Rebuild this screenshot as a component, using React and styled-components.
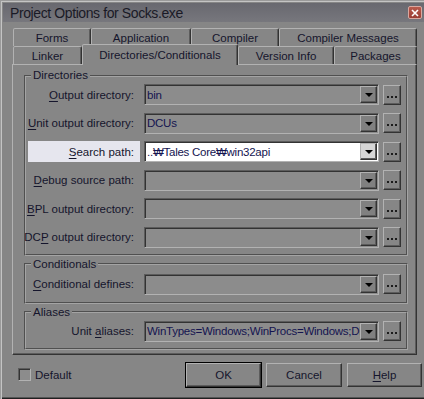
import React from 'react'
import styled, { createGlobalStyle } from 'styled-components'

const c = {
  face: '#868686',
  light: '#b2b2b2',
  mid: '#9c9c9c',
  shadow: '#5c5c5c',
  dark: '#333333',
  text: '#15152c',
  field: '#8c8c8c',
}

const GlobalStyle = createGlobalStyle`
  body {
    margin: 0;
    background: ${c.face};
  }
  * {
    box-sizing: border-box;
  }
`

const Window = styled.div`
  width: 424px;
  height: 399px;
  overflow: hidden;
  display: flex;
  flex-direction: column;
  padding: 3px 0 3px 3px;
  background: ${c.face};
  box-shadow: inset 1px 1px 0 #9a9a9a, inset 2px 2px 0 #c4c4c4,
    inset 0 -1px 0 #202020, inset 0 -2px 0 #555;
  font-family: 'Liberation Sans', Arial, sans-serif;
  font-size: 11.5px;
  color: ${c.text};
`

const TitleBar = styled.div`
  height: 19px;
  flex: 0 0 19px;
  display: flex;
  align-items: center;
  justify-content: space-between;
  padding: 0 2px 0 7px;
  background: linear-gradient(#68686f, #77777d);
  font-size: 14px;
  letter-spacing: -0.4px;
  color: #1a1a26;
`

const CloseBtn = styled.div`
  width: 14px;
  height: 13px;
  border-radius: 2px;
  border: 1px solid #d8a8a0;
  background: linear-gradient(#b85a4c, #9a3e34);
  display: flex;
  align-items: center;
  justify-content: center;
`

const Body = styled.div`
  flex: 1;
  display: flex;
  flex-direction: column;
  padding: 7px 7px 0 9px;
`

const TabRow = styled.div`
  display: flex;
  align-items: flex-end;
  height: ${p => p.$h}px;
  margin-left: 1px;
`

const Tab = styled.div`
  position: relative;
  z-index: ${p => (p.$active ? 2 : 1)};
  width: ${p => p.$w}px;
  height: ${p => (p.$active ? 21 : p.$h)}px;
  margin-bottom: ${p => (p.$active ? -1 : 0)}px;
  display: flex;
  align-items: ${p => (p.$active ? 'flex-start' : 'center')};
  justify-content: center;
  padding-top: ${p => (p.$active ? 4 : 0)}px;
  background: ${c.face};
  border: 1px solid;
  border-bottom: none;
  border-color: ${c.light} ${c.dark} transparent ${c.light};
  border-radius: 2px 2px 0 0;
  box-shadow: inset -1px 0 0 ${c.shadow};
`

const Page = styled.div`
  height: 291px;
  flex: 0 0 291px;
  display: flex;
  flex-direction: column;
  gap: 2px;
  padding: 4px 8px 0 11px;
  border: 1px solid;
  border-color: ${c.light} ${c.dark} ${c.dark} ${c.light};
  box-shadow: inset -1px -1px 0 ${c.shadow};
`

const Group = styled.fieldset`
  margin: 0;
  min-width: 0;
  padding: ${p => p.$pt}px 0 ${p => p.$pb}px 2px;
  border: 2px groove #a4a4a4;
`

const Legend = styled.legend`
  margin-left: 3px;
  padding: 0 2px;
  line-height: 13px;
`

const Rows = styled.div`
  display: grid;
  grid-template-columns: 112px 235px 18px;
  grid-auto-rows: 21px;
  column-gap: 4px;
  row-gap: 7.6px;
`

const Label = styled.label`
  display: flex;
  align-items: center;
  justify-content: flex-end;
  padding-right: 6px;
  white-space: pre;
  background: ${p => (p.$hl ? '#e6e6ee' : 'transparent')};
  u {
    text-decoration-thickness: 1px;
    text-underline-offset: 2px;
  }
`

const Field = styled.div`
  display: flex;
  align-items: center;
  padding: 1px 1px 1px 2px;
  background: ${p => (p.$white ? '#ffffff' : c.field)};
  border: 1px solid;
  border-color: ${c.shadow} ${c.light} ${c.light} ${c.shadow};
  box-shadow: inset 1px 1px 0 ${c.dark};
  color: #141450;
  overflow: hidden;
`

const Value = styled.span`
  flex: 1;
  min-width: 0;
  overflow: hidden;
  white-space: nowrap;
  font-size: 11.5px;
  letter-spacing: -0.25px;
`

const DropBtn = styled.div`
  flex: 0 0 17px;
  height: 17px;
  display: flex;
  align-items: center;
  justify-content: center;
  background: ${p => (p.$white ? '#d6d6d6' : '#808080')};
  border: 1px solid;
  border-color: ${c.light} ${c.dark} ${c.dark} ${c.light};
  box-shadow: inset -1px -1px 0 ${c.shadow};

  &::after {
    content: '';
    border-left: 4px solid transparent;
    border-right: 4px solid transparent;
    border-top: 4px solid #000;
    margin-top: 1px;
  }
`

const Button = styled.div`
  width: ${p => p.$w}px;
  height: ${p => p.$h}px;
  display: flex;
  align-items: center;
  justify-content: center;
  background: ${c.face};
  border: 1px solid;
  border-color: ${c.light} ${c.dark} ${c.dark} ${c.light};
  box-shadow: inset -1px -1px 0 ${c.shadow};
  outline: ${p => (p.$default ? '1px solid #000' : 'none')};
  outline-offset: 0;
  u {
    text-underline-offset: 2px;
  }
`

const Dots = styled(Button)`
  align-self: center;
  gap: 2px;
  align-items: flex-end;
  padding-bottom: 6px;

  i {
    width: 2px;
    height: 2px;
    background: #1c1c1c;
  }
`

const BottomBar = styled.div`
  flex: 1;
  display: flex;
  align-items: center;
  gap: 5px;
  padding: 0 0 2px 6px;
  margin-right: -5px;
`

const Check = styled.div`
  width: 13px;
  height: 13px;
  background: ${c.field};
  border: 1px solid;
  border-color: ${c.shadow} ${c.light} ${c.light} ${c.shadow};
  box-shadow: inset 1px 1px 0 ${c.dark};
`

const CheckLabel = styled.span`
  margin-left: -1px;
  margin-right: auto;
`

const topTabs = [
  { t: 'Forms', w: 78 },
  { t: 'Application', w: 100 },
  { t: 'Compiler', w: 88 },
  { t: 'Compiler Messages', w: 138 },
]

const frontTabs = [
  { t: 'Linker', w: 69 },
  { t: 'Directories/Conditionals', w: 156, active: true },
  { t: 'Version Info', w: 96 },
  { t: 'Packages', w: 83 },
]

const dirRows = [
  { pre: '', key: 'O', post: 'utput directory:', value: 'bin' },
  { pre: '', key: 'U', post: 'nit output directory:', value: 'DCUs' },
  { pre: '', key: 'S', post: 'earch path:', value: '..\u20a9Tales Core\u20a9win32api', white: true, hl: true },
  { pre: '', key: 'D', post: 'ebug source path:', value: '' },
  { pre: '', key: 'B', post: 'PL output directory:', value: '' },
  { pre: 'DC', key: 'P', post: ' output directory:', value: '' },
]

const Row = ({ row }) => (
  <>
    <Label $hl={row.hl}>
      <span>{row.pre}<u>{row.key}</u>{row.post}</span>
    </Label>
    <Field $white={row.white}>
      <Value>{row.value}</Value>
      <DropBtn $white={row.white} />
    </Field>
    <Dots $w={18} $h={20}><i /><i /><i /></Dots>
  </>
)

const App = () => (
  <Window>
    <GlobalStyle />
    <TitleBar>
      <span>Project Options for Socks.exe</span>
      <CloseBtn>
        <svg width="8" height="8" viewBox="0 0 8 8">
          <path d="M1 1 L7 7 M7 1 L1 7" stroke="#fff" strokeWidth="1.6" />
        </svg>
      </CloseBtn>
    </TitleBar>
    <Body>
      <TabRow $h={17}>
        {topTabs.map(tab => (
          <Tab key={tab.t} $w={tab.w} $h={18}>{tab.t}</Tab>
        ))}
      </TabRow>
      <TabRow $h={18}>
        {frontTabs.map(tab => (
          <Tab key={tab.t} $w={tab.w} $h={18} $active={tab.active}>{tab.t}</Tab>
        ))}
      </TabRow>
      <Page>
        <Group $pt={2} $pb={6}>
          <Legend>Directories</Legend>
          <Rows>
            {dirRows.map(r => <Row key={r.post} row={r} />)}
          </Rows>
        </Group>
        <Group $pt={3} $pb={7}>
          <Legend>Conditionals</Legend>
          <Rows>
            <Row row={{ pre: '', key: 'C', post: 'onditional defines:', value: '' }} />
          </Rows>
        </Group>
        <Group $pt={2} $pb={6}>
          <Legend>Aliases</Legend>
          <Rows>
            <Row row={{ pre: 'Unit ', key: 'a', post: 'liases:', value: 'WinTypes=Windows;WinProcs=Windows;DbiTypes=BDE' }} />
          </Rows>
        </Group>
      </Page>
      <BottomBar>
        <Check />
        <CheckLabel>Default</CheckLabel>
        <Button $w={75} $h={24} $default>OK</Button>
        <Button $w={76} $h={24}>Cancel</Button>
        <Button $w={75} $h={24}><u>H</u>elp</Button>
      </BottomBar>
    </Body>
  </Window>
)

export default App
